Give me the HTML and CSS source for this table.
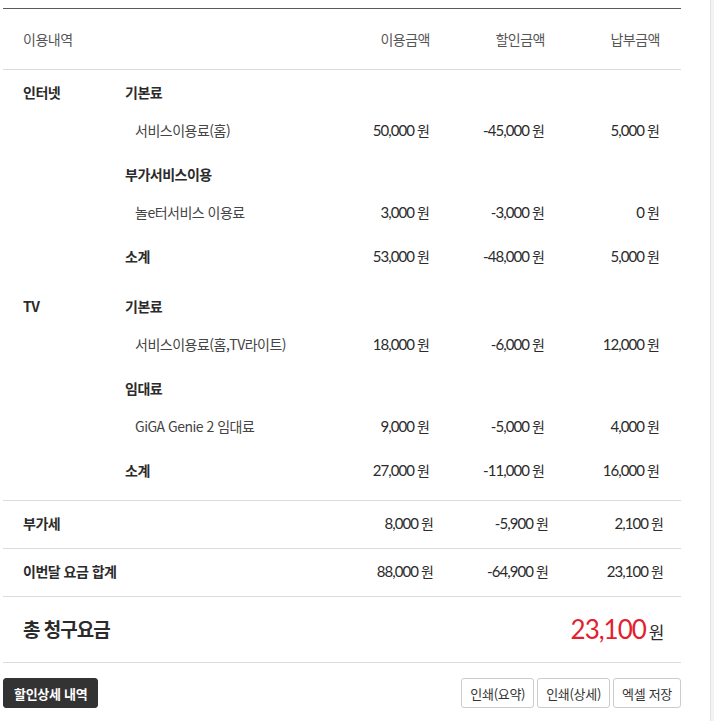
FILE: index.html
```html
<!DOCTYPE html>
<html lang="ko">
<head>
<meta charset="utf-8">
<link rel="stylesheet" href="styles.css">
</head>
<body>
<div class="frame">
  <main class="main">
    <div class="bill">
      <div class="grid thead">
        <div class="cat">이용내역</div>
        <div></div>
        <div class="head">이용금액</div>
        <div class="head">할인금액</div>
        <div class="head">납부금액</div>
      </div>

      <div class="section">
        <div class="grid row">
          <div class="cat">인터넷</div>
          <div class="sub">기본료</div>
          <div></div><div></div><div></div>
        </div>
        <div class="grid row item">
          <div></div>
          <div class="name">서비스이용료(홈)</div>
          <div class="amt">50,000 <span class="won">원</span></div>
          <div class="amt">-45,000 <span class="won">원</span></div>
          <div class="amt">5,000 <span class="won">원</span></div>
        </div>
        <div class="grid row">
          <div></div>
          <div class="sub">부가서비스이용</div>
          <div></div><div></div><div></div>
        </div>
        <div class="grid row item">
          <div></div>
          <div class="name">놀e터서비스 이용료</div>
          <div class="amt">3,000 <span class="won">원</span></div>
          <div class="amt">-3,000 <span class="won">원</span></div>
          <div class="amt">0 <span class="won">원</span></div>
        </div>
        <div class="grid row">
          <div></div>
          <div class="sub">소계</div>
          <div class="amt">53,000 <span class="won">원</span></div>
          <div class="amt">-48,000 <span class="won">원</span></div>
          <div class="amt">5,000 <span class="won">원</span></div>
        </div>
      </div>

      <div class="section">
        <div class="grid row">
          <div class="cat">TV</div>
          <div class="sub">기본료</div>
          <div></div><div></div><div></div>
        </div>
        <div class="grid row item">
          <div></div>
          <div class="name">서비스이용료(홈,TV라이트)</div>
          <div class="amt">18,000 <span class="won">원</span></div>
          <div class="amt">-6,000 <span class="won">원</span></div>
          <div class="amt">12,000 <span class="won">원</span></div>
        </div>
        <div class="grid row">
          <div></div>
          <div class="sub">임대료</div>
          <div></div><div></div><div></div>
        </div>
        <div class="grid row item">
          <div></div>
          <div class="name">GiGA Genie 2 임대료</div>
          <div class="amt">9,000 <span class="won">원</span></div>
          <div class="amt">-5,000 <span class="won">원</span></div>
          <div class="amt">4,000 <span class="won">원</span></div>
        </div>
        <div class="grid row">
          <div></div>
          <div class="sub">소계</div>
          <div class="amt">27,000 <span class="won">원</span></div>
          <div class="amt">-11,000 <span class="won">원</span></div>
          <div class="amt">16,000 <span class="won">원</span></div>
        </div>
      </div>

      <div class="grid2 sumrow">
        <div class="cat">부가세</div>
        <div class="amt">8,000 <span class="won">원</span></div>
        <div class="amt">-5,900 <span class="won">원</span></div>
        <div class="amt">2,100 <span class="won">원</span></div>
      </div>
      <div class="grid2 sumrow">
        <div class="cat">이번달 요금 합계</div>
        <div class="amt">88,000 <span class="won">원</span></div>
        <div class="amt">-64,900 <span class="won">원</span></div>
        <div class="amt">23,100 <span class="won">원</span></div>
      </div>
      <div class="totalrow">
        <div class="total-label">총 청구요금</div>
        <div class="total-amt"><span class="total-num">23,100</span><span class="total-unit">원</span></div>
      </div>
    </div>

    <div class="actions">
      <button class="btn btn-dark">할인상세 내역</button>
      <div class="btn-group">
        <button class="btn">인쇄(요약)</button>
        <button class="btn">인쇄(상세)</button>
        <button class="btn">엑셀 저장</button>
      </div>
    </div>
  </main>
  <div class="scrollbar"></div>
</div>
</body>
</html>
```

FILE: styles.css
```css
* { box-sizing: border-box; }
html, body { margin: 0; padding: 0; background: #fff; }
body {
  font-family: "Noto Sans CJK KR", "Noto Sans", sans-serif;
  color: #2b2b2b;
  font-size: 14px;
  letter-spacing: -0.5px;
}
.frame {
  display: flex;
  width: 714px;
  height: 721px;
  overflow: hidden;
}
.main {
  width: 710px;
  padding: 8px 29px 0 3px;
}
.scrollbar {
  width: 4px;
  height: 721px;
  background: #f3f3f3;
  border-left: 1px solid #e2e2e2;
}
.bill {
  border-top: 1px solid #5a5a5a;
}
.grid {
  display: grid;
  grid-template-columns: 102px 1fr 115px 115px 115px;
  padding: 0 21px 0 20px;
  align-items: center;
}
.grid2 {
  display: grid;
  grid-template-columns: 1fr 115px 115px 115px;
  padding: 0 17px 0 20px;
  align-items: center;
}
.thead {
  height: 61px;
  border-bottom: 1px solid #dcdcdc;
  color: #555;
  padding-bottom: 1px;
}
.head { text-align: right; }
.amt {
  text-align: right;
  white-space: nowrap;
  font-family: "Lato", "Noto Sans CJK KR", sans-serif;
  font-size: 15px;
  letter-spacing: -0.9px;
}
.won {
  font-family: "Noto Sans CJK KR", sans-serif;
  font-size: 14px;
  letter-spacing: 0;
}
.section {
  padding: 3px 0 10px;
}
.section + .section { padding: 2px 0 11px; }
.row { height: 38px; }
.row.item { height: 44px; padding-bottom: 6px; }
.cat { font-weight: 700; }
.thead .cat { font-weight: 400; }
.sub { font-weight: 700; }
.name { padding-left: 10px; color: #444; }
.sumrow {
  height: 48px;
  border-top: 1px solid #dcdcdc;
  padding-bottom: 3px;
}
.totalrow {
  display: flex;
  justify-content: space-between;
  align-items: center;
  height: 67px;
  border-top: 1px solid #dcdcdc;
  border-bottom: 1px solid #dcdcdc;
  padding: 0 17px 2px 20px;
}
.total-label {
  font-size: 19px;
  font-weight: 700;
  letter-spacing: -1px;
}
.total-amt { display: flex; align-items: baseline; gap: 3px; }
.total-num {
  font-family: "Lato", "Noto Sans CJK KR", sans-serif;
  font-size: 26px;
  color: #e4202e;
  letter-spacing: -1px;
}
.total-unit { font-size: 17px; }
.actions {
  display: flex;
  justify-content: space-between;
  margin-top: 15px;
}
.btn-group { display: flex; gap: 3px; }
.btn {
  font-family: inherit;
  font-size: 13px;
  letter-spacing: -0.3px;
  height: 30px;
  padding: 0 8px;
  background: #fff;
  color: #333;
  border: 1px solid #ccc;
  border-radius: 3px;
}
.btn-dark {
  background: #333;
  color: #fff;
  border-color: #333;
  font-weight: 700;
  padding: 0 10px;
}
```
